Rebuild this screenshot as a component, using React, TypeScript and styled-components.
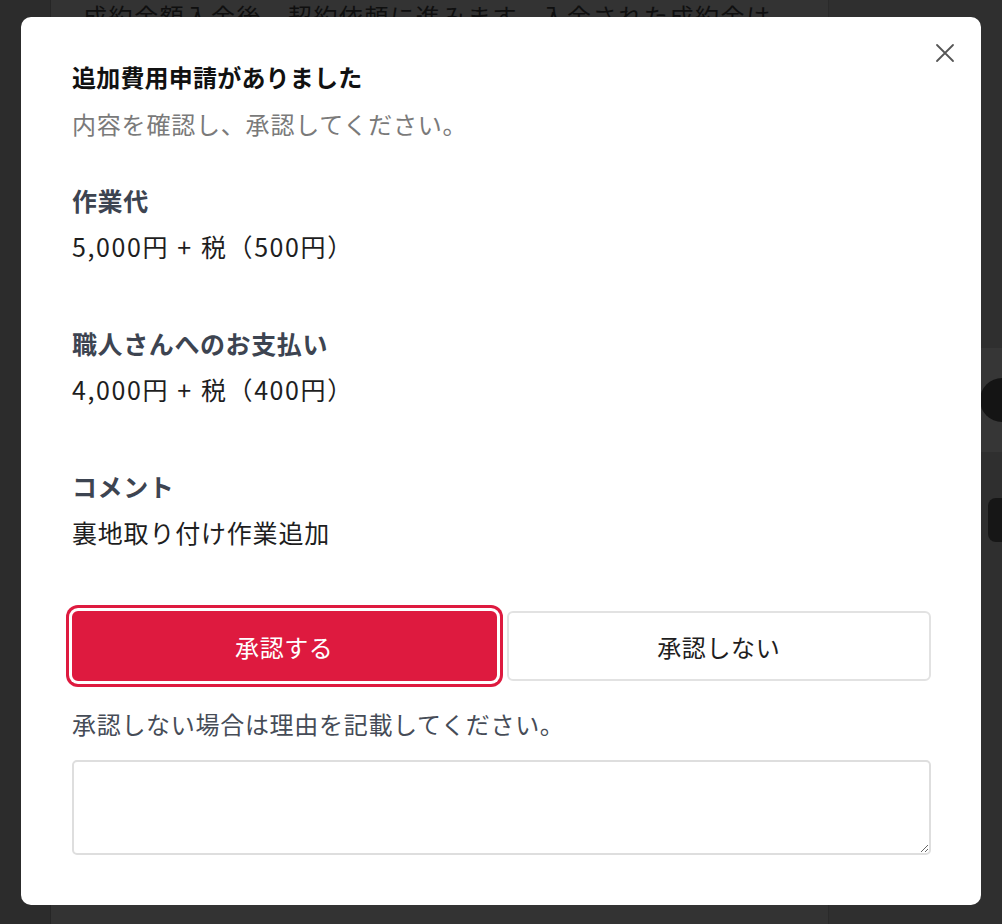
import styled, { createGlobalStyle } from 'styled-components'

const GlobalStyle = createGlobalStyle`
  html, body {
    margin: 0;
    padding: 0;
    height: 100%;
  }
  body {
    font-family: "Noto Sans CJK JP", "Noto Sans", sans-serif;
    background: #2e2e2e;
  }
  #root {
    height: 100%;
  }
`

/* dimmed page behind the modal */
const Page = styled.div`
  display: flex;
  height: 100vh;
  overflow: hidden;
  background: #2f2f2f;
`

const Side = styled.div`
  width: 50px;
  flex-shrink: 0;
  background: #2c2c2c;
  border-right: 1px solid #262626;
`

const Main = styled.div`
  width: 777px;
  flex-shrink: 0;
  background: #333333;
  border-right: 1px solid #2a2a2a;
  .notice {
    margin: 0;
    padding: 0 0 0 32px;
    font-size: 24px;
    line-height: 32px;
    letter-spacing: 1.6px;
    color: #0f0f0f;
  }
`

const Rest = styled.div`
  flex: 1;
  display: flex;
  flex-direction: column;
  align-items: flex-end;
  padding-top: 348px;
  .band {
    width: 100%;
    height: 104px;
    background: #363636;
    display: flex;
    justify-content: flex-end;
    align-items: center;
  }
  .dot {
    width: 44px;
    height: 44px;
    margin-right: -22px;
    border-radius: 50%;
    background: #141414;
  }
  .pill {
    margin-top: 46px;
    width: 30px;
    height: 44px;
    margin-right: -16px;
    border-radius: 8px;
    background: #161616;
  }
`

const Overlay = styled.div`
  position: fixed;
  inset: 0;
  display: flex;
  align-items: flex-start;
  padding: 17px 0 0 21px;
`

const Modal = styled.div`
  position: relative;
  width: 960px;
  box-sizing: border-box;
  padding: 37px 50px 50px 51px;
  background: #fff;
  border-radius: 10px;
`

const CloseButton = styled.button`
  position: absolute;
  top: 22px;
  right: 22px;
  width: 28px;
  height: 28px;
  padding: 0;
  border: none;
  background: none;
  display: flex;
  align-items: center;
  justify-content: center;
  cursor: pointer;
`

const Title = styled.h2`
  margin: 0;
  font-size: 24px;
  line-height: 46px;
  font-weight: 700;
  letter-spacing: 0.2px;
  color: #111;
`

const Lead = styled.p`
  margin: 0;
  font-size: 24px;
  line-height: 48px;
  letter-spacing: 0.8px;
  color: #7a7a7a;
`

const Section = styled.div<{ $first?: boolean }>`
  margin-top: ${(p) => (p.$first ? '29px' : '51px')};
`

const Label = styled.div`
  font-size: 25px;
  line-height: 46px;
  font-weight: 700;
  letter-spacing: 0.6px;
  color: #3d4451;
`

const Value = styled.div<{ $amount?: boolean }>`
  font-size: 25px;
  line-height: 46px;
  letter-spacing: ${(p) => (p.$amount ? '1.6px' : '0.8px')};
  word-spacing: ${(p) => (p.$amount ? '1px' : '0')};
  color: #1e1e1e;
`

const Actions = styled.div`
  margin-top: 56px;
  display: grid;
  grid-template-columns: 1fr 1fr;
  gap: 10px;
`

const ActionButton = styled.button<{ $primary?: boolean }>`
  height: 70px;
  border-radius: 6px;
  font-family: inherit;
  font-size: 24px;
  letter-spacing: 0.6px;
  cursor: pointer;
  border: 2px solid ${(p) => (p.$primary ? '#de1a3f' : '#e2e2e2')};
  background: ${(p) => (p.$primary ? '#de1a3f' : '#fff')};
  color: ${(p) => (p.$primary ? '#fff' : '#1e1e1e')};
  box-shadow: ${(p) => (p.$primary ? '0 0 0 3px #fff, 0 0 0 6px #de1a3f' : 'none')};
`

const Hint = styled.div`
  margin-top: 20px;
  font-size: 24px;
  line-height: 46px;
  letter-spacing: 0.7px;
  color: #464c57;
`

const Reason = styled.textarea`
  display: block;
  margin-top: 13px;
  width: 100%;
  height: 95px;
  box-sizing: border-box;
  border: 2px solid #dedede;
  border-radius: 5px;
  padding: 10px 14px;
  font-family: inherit;
  font-size: 20px;
  resize: vertical;
  outline: none;
`

const items = [
  { label: '作業代', value: '5,000円 + 税（500円）', amount: true },
  { label: '職人さんへのお支払い', value: '4,000円 + 税（400円）', amount: true },
  { label: 'コメント', value: '裏地取り付け作業追加', amount: false },
]

export default function App() {
  return (
    <>
      <GlobalStyle />
      <Page>
        <Side />
        <Main>
          <p className="notice">成約金額入金後、契約依頼に進みます。入金された成約金は</p>
        </Main>
        <Rest>
          <div className="band">
            <div className="dot" />
          </div>
          <div className="pill" />
        </Rest>
      </Page>
      <Overlay>
        <Modal>
          <CloseButton aria-label="閉じる">
            <svg width="20" height="20" viewBox="0 0 20 20">
              <path d="M2 2 L18 18 M18 2 L2 18" stroke="#555" strokeWidth="1.8" strokeLinecap="round" />
            </svg>
          </CloseButton>
          <Title>追加費用申請がありました</Title>
          <Lead>内容を確認し、承認してください。</Lead>
          {items.map((it, i) => (
            <Section key={it.label} $first={i === 0}>
              <Label>{it.label}</Label>
              <Value $amount={it.amount}>{it.value}</Value>
            </Section>
          ))}
          <Actions>
            <ActionButton $primary>承認する</ActionButton>
            <ActionButton>承認しない</ActionButton>
          </Actions>
          <Hint>承認しない場合は理由を記載してください。</Hint>
          <Reason />
        </Modal>
      </Overlay>
    </>
  )
}
